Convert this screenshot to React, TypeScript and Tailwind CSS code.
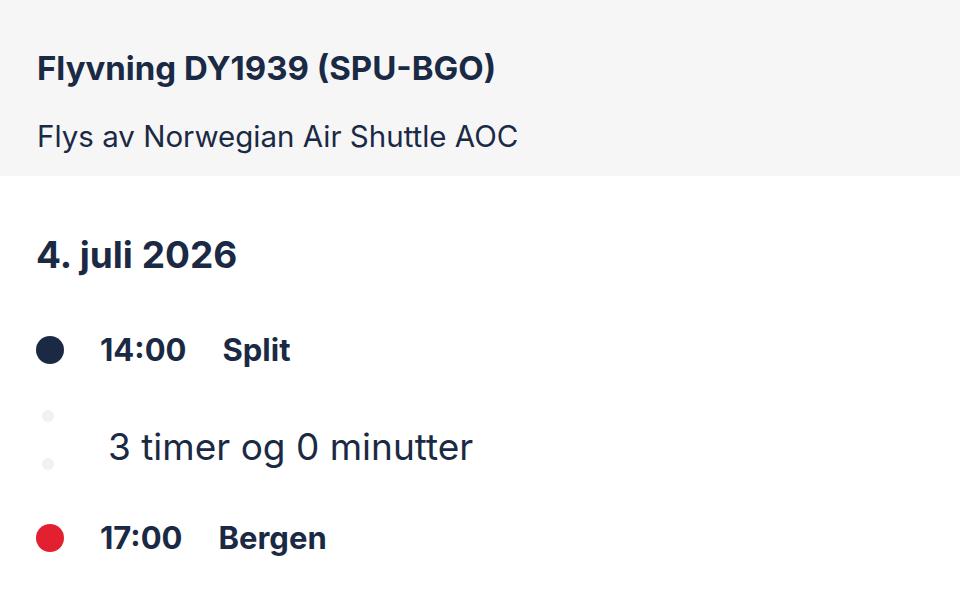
import React from 'react';

const font = { fontFamily: 'Inter, "Noto Sans", sans-serif' };

export default function App() {
  return (
    <div className="w-[960px] h-[598px] bg-white text-[#1b2a44] overflow-hidden" style={font}>
      <div className="bg-[#f6f6f7] h-[176px] px-[37px] pt-[46px]">
        <h1 className="text-[33px] font-bold leading-[44px]">Flyvning DY1939 (SPU-BGO)</h1>
        <p className="mt-[28px] text-[29.5px] leading-[36px]">Flys av Norwegian Air Shuttle AOC</p>
      </div>

      <div className="px-[36px] pt-[54px]">
        <h2 className="text-[37px] font-bold leading-[50px]">4. juli 2026</h2>

        <div className="mt-[48px] flex items-center h-[44px]">
          <span className="w-[28px] h-[28px] rounded-full bg-[#1b2a44]" />
          <span className="ml-[36px] text-[31px] font-bold">14:00</span>
          <span className="ml-[36px] text-[31px] font-bold">Split</span>
        </div>

        <div className="flex items-center h-[100px] mt-[22px]">
          <div className="w-[24px] mb-[8px] flex flex-col items-center gap-[36px]">
            <span className="w-[12px] h-[12px] rounded-full bg-[#f1f1f2]" />
            <span className="w-[12px] h-[12px] rounded-full bg-[#f1f1f2]" />
          </div>
          <span className="ml-[48px] mt-[6px] text-[37px] leading-[40px]">3 timer og 0 minutter</span>
        </div>

        <div className="mt-[22px] flex items-center h-[44px]">
          <span className="w-[28px] h-[28px] rounded-full bg-[#e3202f]" />
          <span className="ml-[36px] text-[31px] font-bold">17:00</span>
          <span className="ml-[36px] text-[31px] font-bold">Bergen</span>
        </div>
      </div>
    </div>
  );
}
